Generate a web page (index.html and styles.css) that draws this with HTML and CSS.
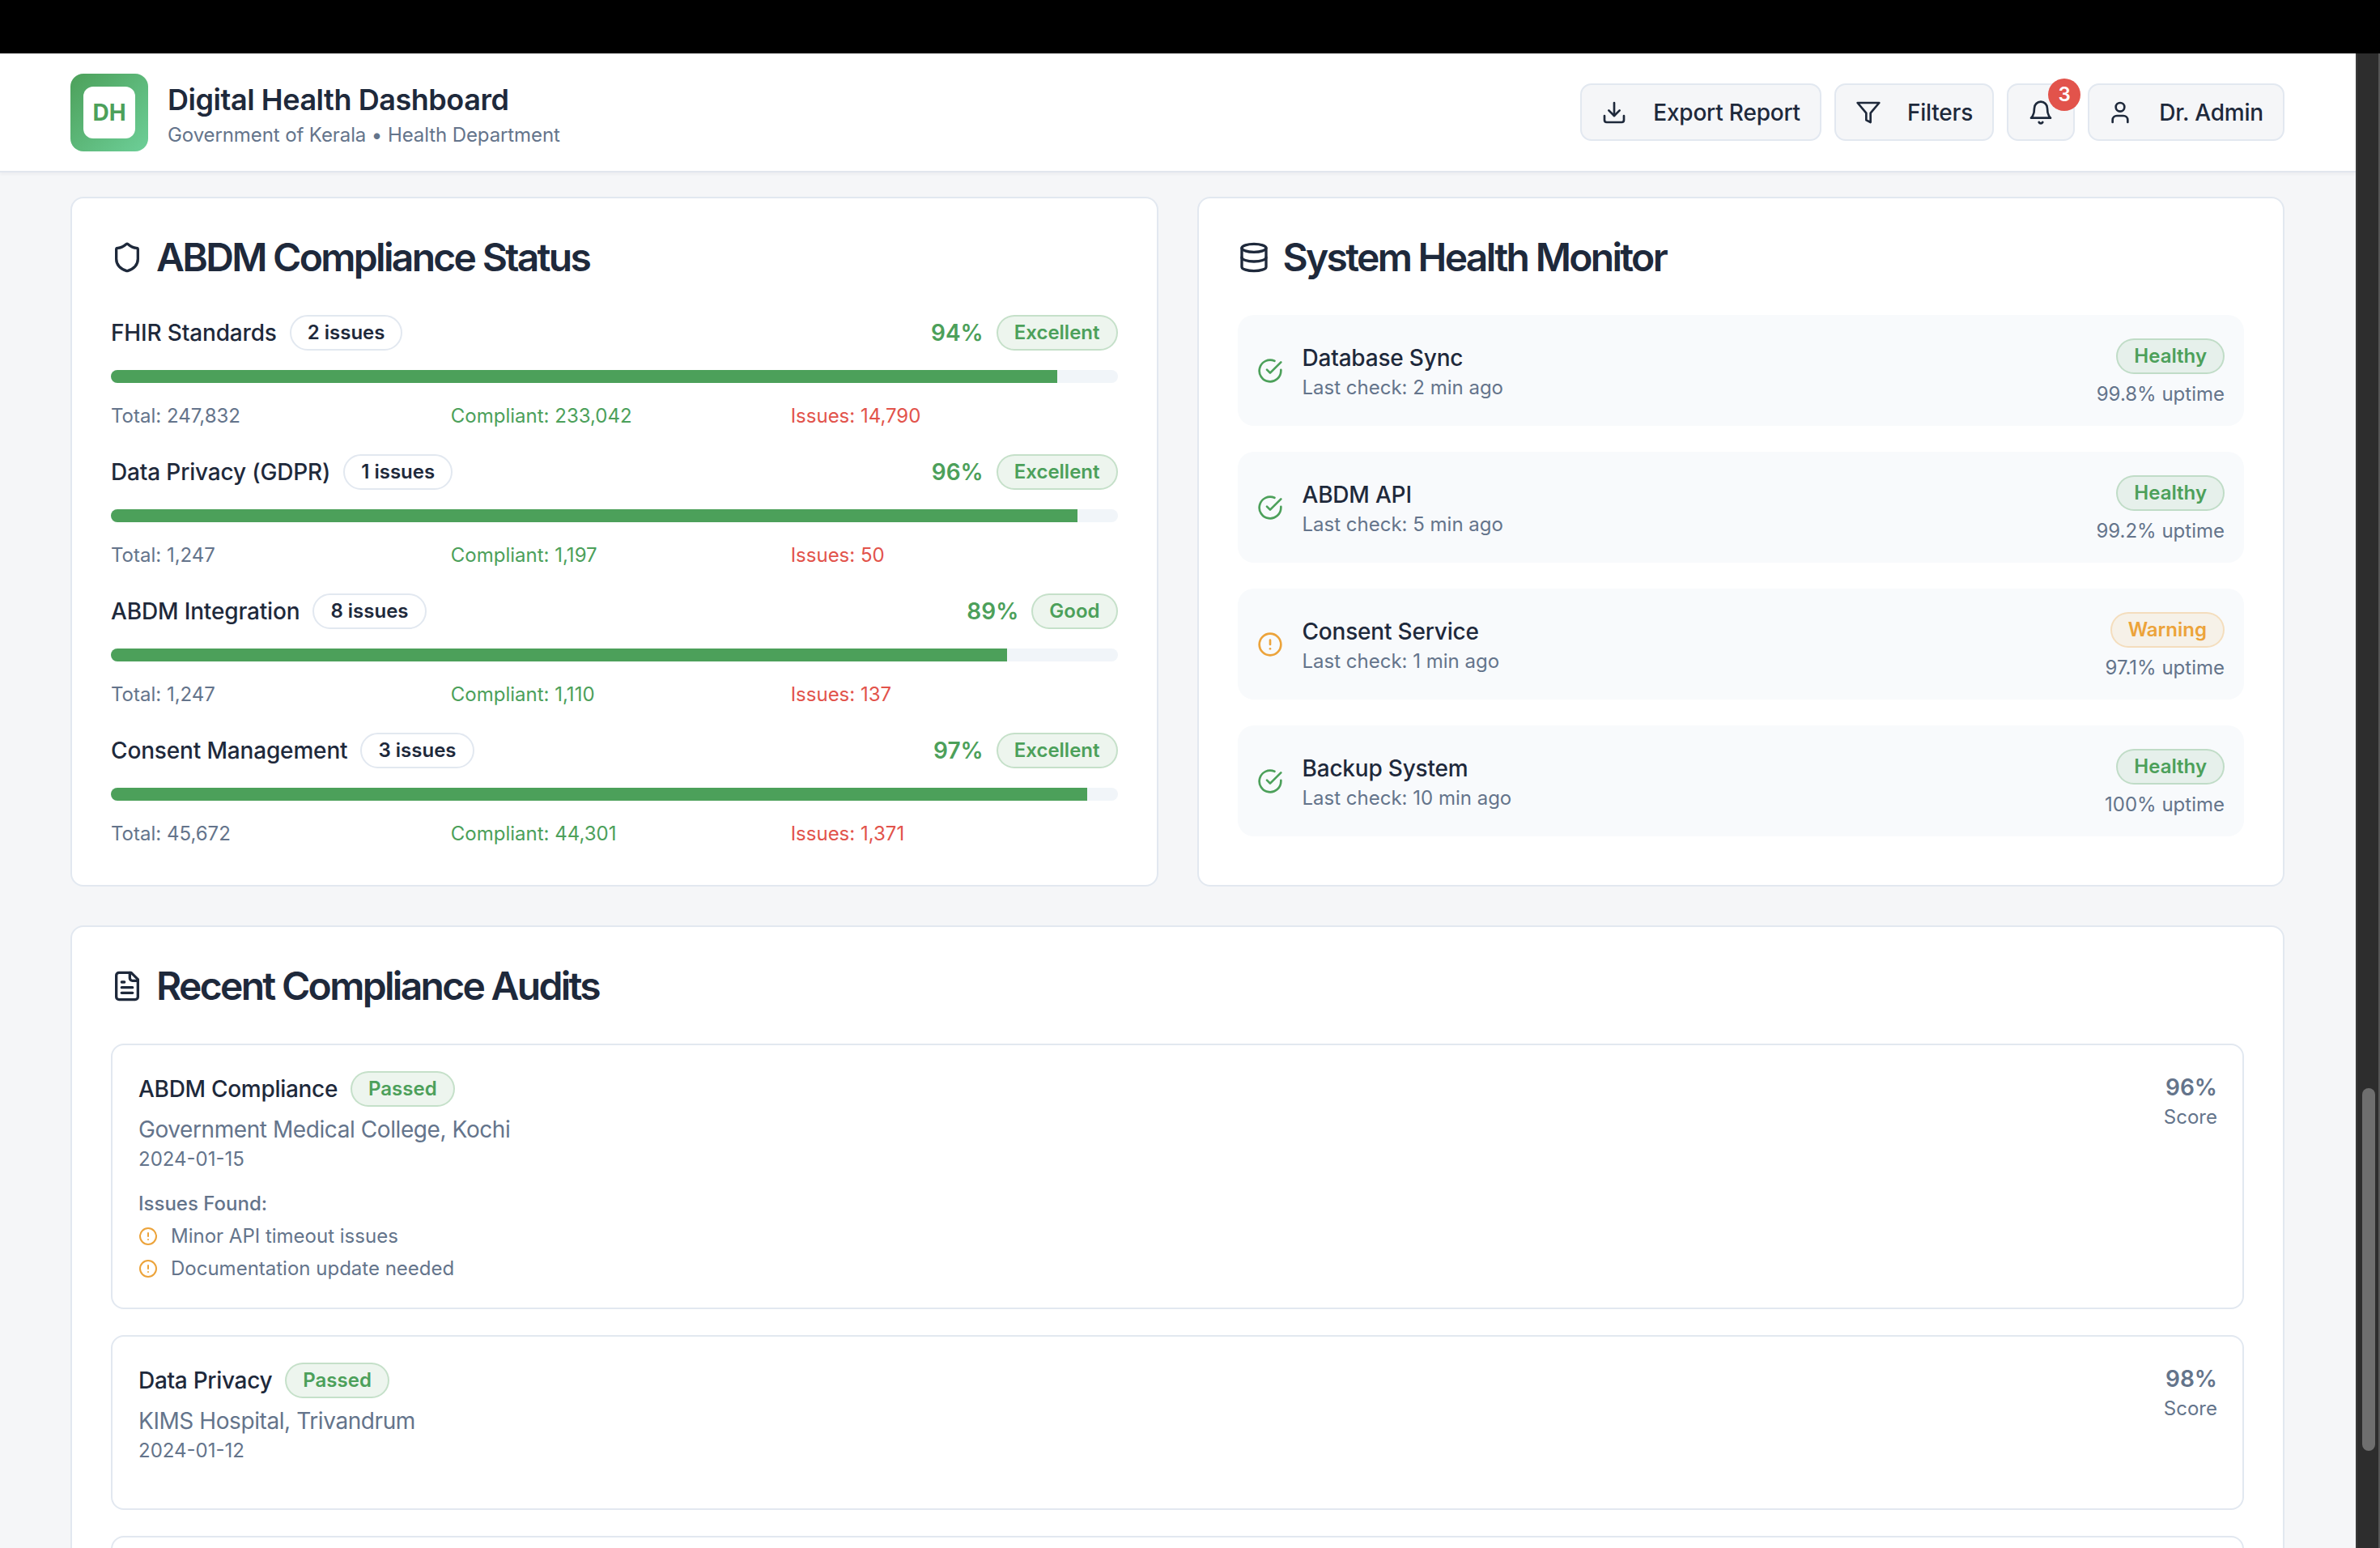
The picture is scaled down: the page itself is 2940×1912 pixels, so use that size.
FILE: index.html
```html
<!DOCTYPE html>
<html lang="en">
<head>
    <meta charset="UTF-8">
    <meta name="viewport" content="width=device-width, initial-scale=1.0">
    <title>Digital Health Dashboard</title>
    <link rel="stylesheet" href="styles.css">
</head>
<body>
    <div class="topbar"></div>
    <div class="frame">
        <div class="page">
            <header class="header">
                <div class="brand">
                    <div class="logo"><div class="logo-inner">DH</div></div>
                    <div>
                        <h1>Digital Health Dashboard</h1>
                        <p>Government of Kerala • Health Department</p>
                    </div>
                </div>
                <div class="actions">
                    <button class="btn">
                        <svg class="icon-md" viewBox="0 0 24 24"><path d="M21 15v4a2 2 0 0 1-2 2H5a2 2 0 0 1-2-2v-4"/><polyline points="7 10 12 15 17 10"/><line x1="12" y1="15" x2="12" y2="3"/></svg>
                        Export Report
                    </button>
                    <button class="btn">
                        <svg class="icon-md" viewBox="0 0 24 24"><polygon points="22 3 2 3 10 12.46 10 19 14 21 14 12.46 22 3"/></svg>
                        Filters
                    </button>
                    <button class="btn">
                        <svg class="icon-md" viewBox="0 0 24 24"><path d="M6 8a6 6 0 0 1 12 0c0 7 3 9 3 9H3s3-2 3-9"/><path d="M10.3 21a1.94 1.94 0 0 0 3.4 0"/></svg>
                        <span class="count">3</span>
                    </button>
                    <button class="btn btn-user">
                        <svg class="icon-md" viewBox="0 0 24 24"><path d="M19 21v-2a4 4 0 0 0-4-4H9a4 4 0 0 0-4 4v2"/><circle cx="12" cy="7" r="4"/></svg>
                        Dr. Admin
                    </button>
                </div>
            </header>

            <main class="content">
                <div class="columns">
                    <section class="card">
                        <h2>
                            <svg class="icon-lg" viewBox="0 0 24 24"><path d="M20 13c0 5-3.5 7.5-7.66 8.95a1 1 0 0 1-.67-.01C7.5 20.5 4 18 4 13V6a1 1 0 0 1 1-1c2 0 4.5-1.2 6.24-2.72a1.17 1.17 0 0 1 1.52 0C14.51 3.81 17 5 19 5a1 1 0 0 1 1 1z"/></svg>
                            ABDM Compliance Status
                        </h2>

                        <div class="metric">
                            <div class="metric-head">
                                <div class="metric-name">FHIR Standards <span class="badge">2 issues</span></div>
                                <div class="metric-score"><span class="percent">94%</span> <span class="badge badge-green">Excellent</span></div>
                            </div>
                            <div class="track"><div class="fill" style="width: 94%"></div></div>
                            <div class="stats">
                                <span>Total: 247,832</span>
                                <span class="green">Compliant: 233,042</span>
                                <span class="red">Issues: 14,790</span>
                            </div>
                        </div>

                        <div class="metric">
                            <div class="metric-head">
                                <div class="metric-name">Data Privacy (GDPR) <span class="badge">1 issues</span></div>
                                <div class="metric-score"><span class="percent">96%</span> <span class="badge badge-green">Excellent</span></div>
                            </div>
                            <div class="track"><div class="fill" style="width: 96%"></div></div>
                            <div class="stats">
                                <span>Total: 1,247</span>
                                <span class="green">Compliant: 1,197</span>
                                <span class="red">Issues: 50</span>
                            </div>
                        </div>

                        <div class="metric">
                            <div class="metric-head">
                                <div class="metric-name">ABDM Integration <span class="badge">8 issues</span></div>
                                <div class="metric-score"><span class="percent">89%</span> <span class="badge badge-green">Good</span></div>
                            </div>
                            <div class="track"><div class="fill" style="width: 89%"></div></div>
                            <div class="stats">
                                <span>Total: 1,247</span>
                                <span class="green">Compliant: 1,110</span>
                                <span class="red">Issues: 137</span>
                            </div>
                        </div>

                        <div class="metric">
                            <div class="metric-head">
                                <div class="metric-name">Consent Management <span class="badge">3 issues</span></div>
                                <div class="metric-score"><span class="percent">97%</span> <span class="badge badge-green">Excellent</span></div>
                            </div>
                            <div class="track"><div class="fill" style="width: 97%"></div></div>
                            <div class="stats">
                                <span>Total: 45,672</span>
                                <span class="green">Compliant: 44,301</span>
                                <span class="red">Issues: 1,371</span>
                            </div>
                        </div>
                    </section>

                    <section class="card">
                        <h2>
                            <svg class="icon-lg" viewBox="0 0 24 24"><ellipse cx="12" cy="5" rx="9" ry="3"/><path d="M3 5V19A9 3 0 0 0 21 19V5"/><path d="M3 12A9 3 0 0 0 21 12"/></svg>
                            System Health Monitor
                        </h2>

                        <div class="system">
                            <div class="system-left">
                                <svg class="icon-md green" viewBox="0 0 24 24"><path d="M22 11.08V12a10 10 0 1 1-5.93-9.14"/><path d="m9 11 3 3L22 4"/></svg>
                                <div>
                                    <div class="system-name">Database Sync</div>
                                    <div class="muted">Last check: 2 min ago</div>
                                </div>
                            </div>
                            <div class="system-right">
                                <span class="badge badge-green">Healthy</span>
                                <div class="muted">99.8% uptime</div>
                            </div>
                        </div>

                        <div class="system">
                            <div class="system-left">
                                <svg class="icon-md green" viewBox="0 0 24 24"><path d="M22 11.08V12a10 10 0 1 1-5.93-9.14"/><path d="m9 11 3 3L22 4"/></svg>
                                <div>
                                    <div class="system-name">ABDM API</div>
                                    <div class="muted">Last check: 5 min ago</div>
                                </div>
                            </div>
                            <div class="system-right">
                                <span class="badge badge-green">Healthy</span>
                                <div class="muted">99.2% uptime</div>
                            </div>
                        </div>

                        <div class="system">
                            <div class="system-left">
                                <svg class="icon-md orange" viewBox="0 0 24 24"><circle cx="12" cy="12" r="10"/><line x1="12" y1="8" x2="12" y2="12"/><line x1="12" y1="16" x2="12.01" y2="16"/></svg>
                                <div>
                                    <div class="system-name">Consent Service</div>
                                    <div class="muted">Last check: 1 min ago</div>
                                </div>
                            </div>
                            <div class="system-right">
                                <span class="badge badge-orange">Warning</span>
                                <div class="muted">97.1% uptime</div>
                            </div>
                        </div>

                        <div class="system">
                            <div class="system-left">
                                <svg class="icon-md green" viewBox="0 0 24 24"><path d="M22 11.08V12a10 10 0 1 1-5.93-9.14"/><path d="m9 11 3 3L22 4"/></svg>
                                <div>
                                    <div class="system-name">Backup System</div>
                                    <div class="muted">Last check: 10 min ago</div>
                                </div>
                            </div>
                            <div class="system-right">
                                <span class="badge badge-green">Healthy</span>
                                <div class="muted">100% uptime</div>
                            </div>
                        </div>
                    </section>
                </div>

                <section class="card">
                    <h2>
                        <svg class="icon-lg" viewBox="0 0 24 24"><path d="M15 2H6a2 2 0 0 0-2 2v16a2 2 0 0 0 2 2h12a2 2 0 0 0 2-2V7Z"/><path d="M14 2v4a2 2 0 0 0 2 2h4"/><path d="M10 9H8"/><path d="M16 13H8"/><path d="M16 17H8"/></svg>
                        Recent Compliance Audits
                    </h2>

                    <div class="audit">
                        <div class="audit-top">
                            <div>
                                <div class="audit-title">ABDM Compliance <span class="badge badge-green">Passed</span></div>
                                <div class="audit-place">Government Medical College, Kochi</div>
                                <div class="muted">2024-01-15</div>
                            </div>
                            <div class="audit-score">
                                <div class="score-value">96%</div>
                                <div class="muted">Score</div>
                            </div>
                        </div>
                        <div class="issues">
                            <div class="issues-title">Issues Found:</div>
                            <div class="issue">
                                <svg class="icon-sm orange" viewBox="0 0 24 24"><circle cx="12" cy="12" r="10"/><line x1="12" y1="8" x2="12" y2="12"/><line x1="12" y1="16" x2="12.01" y2="16"/></svg>
                                Minor API timeout issues
                            </div>
                            <div class="issue">
                                <svg class="icon-sm orange" viewBox="0 0 24 24"><circle cx="12" cy="12" r="10"/><line x1="12" y1="8" x2="12" y2="12"/><line x1="12" y1="16" x2="12.01" y2="16"/></svg>
                                Documentation update needed
                            </div>
                        </div>
                    </div>

                    <div class="audit audit-clean">
                        <div class="audit-top">
                            <div>
                                <div class="audit-title">Data Privacy <span class="badge badge-green">Passed</span></div>
                                <div class="audit-place">KIMS Hospital, Trivandrum</div>
                                <div class="muted">2024-01-12</div>
                            </div>
                            <div class="audit-score">
                                <div class="score-value">98%</div>
                                <div class="muted">Score</div>
                            </div>
                        </div>
                    </div>

                    <div class="audit audit-clean"></div>
                </section>
            </main>
        </div>
        <div class="scrollbar"><div class="thumb"></div></div>
    </div>
</body>
</html>
```

FILE: styles.css
```css
* {
    box-sizing: border-box;
}
html, body {
    height: 100%;
}
body {
    margin: 0;
    overflow: hidden;
    display: flex;
    flex-direction: column;
    font-family: Inter, "Liberation Sans", sans-serif;
    font-size: 24px;
    line-height: 32px;
    color: #1e293b;
    background-color: #000;
}
svg {
    fill: none;
    stroke: currentColor;
    stroke-width: 2;
    stroke-linecap: round;
    stroke-linejoin: round;
    flex-shrink: 0;
}
.icon-sm {
    width: 24px;
    height: 24px;
}
.icon-md {
    width: 32px;
    height: 32px;
}
.icon-lg {
    width: 40px;
    height: 40px;
}
.topbar {
    height: 66px;
    flex-shrink: 0;
    background-color: #000;
}
.frame {
    flex: 1;
    min-height: 0;
    display: flex;
}
.page {
    flex: 1;
    min-width: 0;
    overflow: hidden;
    background-color: #f5f6f8;
}
.scrollbar {
    width: 30px;
    padding: 1278px 4px 0 6px;
    background-color: #2d2d2d;
    border-left: 2px solid #3a3a3a;
    border-right: 2px solid #555;
}
.thumb {
    height: 448px;
    border-radius: 8px;
    background-color: #6e6e6e;
}

/* header */
.header {
    height: 147px;
    padding: 0 88px 0 87px;
    display: flex;
    justify-content: space-between;
    align-items: center;
    background-color: white;
    border-bottom: 2px solid #e2e6ee;
    box-shadow: 0 2px 4px rgba(30, 41, 59, 0.05);
}
.brand {
    display: flex;
    align-items: center;
    gap: 24px;
}
.logo {
    width: 96px;
    height: 96px;
    padding: 16px;
    border-radius: 16px;
    background: linear-gradient(135deg, #4ca05a, #6dcf98);
}
.logo-inner {
    width: 64px;
    height: 64px;
    display: flex;
    align-items: center;
    justify-content: center;
    border-radius: 12px;
    background-color: white;
    color: #4ca05a;
    font-size: 28px;
    font-weight: 700;
}
h1 {
    margin: 0;
    font-size: 36px;
    line-height: 56px;
    font-weight: 600;
    letter-spacing: -0.45px;
}
.brand p {
    margin: 0;
    color: #64748b;
    letter-spacing: -0.1px;
}
.actions {
    display: flex;
    gap: 16px;
}
.btn {
    height: 71px;
    padding: 0 24px;
    display: flex;
    align-items: center;
    gap: 32px;
    position: relative;
    font: inherit;
    font-size: 28px;
    font-weight: 500;
    letter-spacing: -0.2px;
    color: #1e293b;
    background-color: #f5f6f8;
    border: 2px solid #e2e8f0;
    border-radius: 14px;
}
.btn-user {
    padding-left: 22px;
}
.count {
    position: absolute;
    top: -8px;
    right: -9px;
    width: 40px;
    height: 40px;
    display: flex;
    align-items: center;
    justify-content: center;
    border-radius: 50%;
    background-color: #e2534b;
    color: white;
    font-size: 24px;
    font-weight: 600;
}

/* cards */
.content {
    padding: 30px 88px 0 87px;
    display: flex;
    flex-direction: column;
    gap: 48px;
}
.columns {
    display: grid;
    grid-template-columns: 1fr 1fr;
    gap: 48px;
}
.card {
    padding: 48px;
    background-color: white;
    border: 2px solid #e2e8f0;
    border-radius: 16px;
}
h2 {
    margin: 0 0 46px;
    display: flex;
    align-items: center;
    gap: 16px;
    font-size: 48px;
    line-height: 50px;
    font-weight: 600;
    letter-spacing: -2.7px;
}
.badge {
    display: inline-block;
    padding: 4px 20px;
    border: 2px solid #e2e8f0;
    border-radius: 22px;
    background-color: white;
    font-size: 24px;
    line-height: 32px;
    font-weight: 600;
    letter-spacing: 0;
}
.badge-green {
    color: #4ca05a;
    background-color: rgba(76, 160, 90, 0.1);
    border-color: rgba(76, 160, 90, 0.25);
}
.badge-orange {
    color: #eca33a;
    background-color: rgba(236, 163, 58, 0.1);
    border-color: rgba(236, 163, 58, 0.25);
}
.green {
    color: #4ca05a;
}
.red {
    color: #e2534b;
}
.orange {
    color: #eca33a;
}
.muted {
    padding-top: 2px;
    line-height: 30px;
    color: #64748b;
}

/* compliance rows */
.metric {
    margin-bottom: 32px;
}
.metric:last-child {
    margin-bottom: 0;
}
.metric-head {
    display: flex;
    justify-content: space-between;
    align-items: center;
}
.metric-name {
    display: flex;
    align-items: center;
    gap: 16px;
    font-size: 28px;
    font-weight: 500;
    letter-spacing: -0.16px;
}
.metric-score {
    display: flex;
    align-items: center;
    gap: 16px;
}
.percent {
    color: #4ca05a;
    font-size: 28px;
    font-weight: 600;
}
.track {
    height: 16px;
    margin: 24px 0;
    overflow: hidden;
    border-radius: 8px;
    background-color: #f1f5f9;
}
.fill {
    height: 100%;
    background-color: #4ca05a;
}
.stats {
    display: grid;
    grid-template-columns: repeat(3, 1fr);
    gap: 16px;
    padding-top: 2px;
    line-height: 30px;
    color: #64748b;
}
.stats .green {
    color: #4ca05a;
}
.stats .red {
    color: #e2534b;
}

/* system rows */
.system {
    height: 137px;
    margin-bottom: 32px;
    padding: 0 24px;
    display: flex;
    justify-content: space-between;
    align-items: center;
    border-radius: 20px;
    background-color: #f8fafc;
}
.system:last-child {
    margin-bottom: 0;
}
.system-left {
    display: flex;
    align-items: center;
    gap: 24px;
}
.system-name {
    font-size: 28px;
    line-height: 40px;
    font-weight: 500;
    letter-spacing: -0.2px;
}
.system-right {
    padding-top: 5px;
    display: flex;
    flex-direction: column;
    align-items: flex-end;
    gap: 8px;
}

/* audits */
.audit {
    margin-bottom: 32px;
    padding: 32px 31px 32px 32px;
    border: 2px solid #e2e8f0;
    border-radius: 16px;
}
.audit-clean {
    padding-bottom: 56px;
}
.audit-top {
    display: flex;
    justify-content: space-between;
}
.audit-title {
    display: flex;
    align-items: center;
    gap: 16px;
    font-size: 28px;
    font-weight: 500;
    letter-spacing: -0.3px;
}
.audit-place {
    margin-top: 8px;
    color: #64748b;
    font-size: 28px;
    line-height: 40px;
    letter-spacing: -0.42px;
}
.audit-score {
    text-align: right;
}
.score-value {
    color: #64748b;
    font-size: 28px;
    line-height: 40px;
    font-weight: 600;
}
.issues {
    margin-top: 24px;
    color: #64748b;
}
.issues-title {
    font-weight: 500;
    margin-bottom: 8px;
}
.issue {
    display: flex;
    align-items: center;
    gap: 16px;
    margin-top: 8px;
}
```
